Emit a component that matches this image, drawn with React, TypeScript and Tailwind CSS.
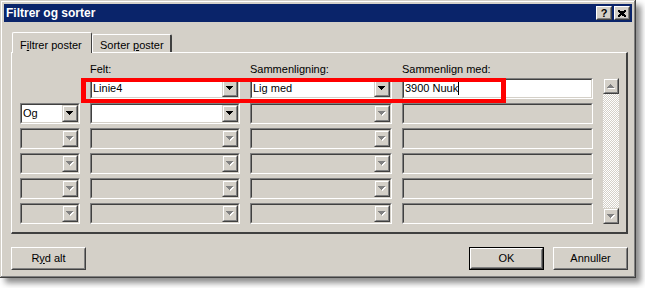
import React from 'react';

const font = "font-['Liberation_Sans',Arial,sans-serif]";

function Arrow({ dir = 'down', disabled = false }: { dir?: 'up' | 'down'; disabled?: boolean }) {
  const rows: [number, number][] = [[0, 7], [1, 5], [2, 3], [3, 1]];
  const y = (i: number) => (dir === 'down' ? i : 3 - i);
  return (
    <svg width="8" height="5" className="block">
      {disabled &&
        rows.map(([x, w], i) => <rect key={'s' + i} x={x + 1} y={y(i) + 1} width={w} height={1} fill="#fff" />)}
      {rows.map(([x, w], i) => (
        <rect key={i} x={x} y={y(i)} width={w} height={1} fill={disabled ? '#808080' : '#000'} />
      ))}
    </svg>
  );
}

// small raised button used in combos and the scrollbar
function SmallBtn({ dir = 'down', disabled = false, h = 'h-[17px]' }: { dir?: 'up' | 'down'; disabled?: boolean; h?: string }) {
  return (
    <div className={`w-[16px] ${h} bg-[#d4d0c8] border border-t-[#d4d0c8] border-l-[#d4d0c8] border-r-[#404040] border-b-[#404040]`}>
      <div className="w-full h-full flex items-center justify-center border border-t-white border-l-white border-r-[#808080] border-b-[#808080]">
        <Arrow dir={dir} disabled={disabled} />
      </div>
    </div>
  );
}

function Field({
  className,
  white = false,
  combo = false,
  arrowDisabled = true,
  children,
}: {
  className: string;
  white?: boolean;
  combo?: boolean;
  arrowDisabled?: boolean;
  children?: React.ReactNode;
}) {
  return (
    <div className={`${className} h-[21px] border border-t-[#808080] border-l-[#808080] border-r-white border-b-white`}>
      <div
        className={`flex h-full border border-t-[#404040] border-l-[#404040] border-r-[#d4d0c8] border-b-[#d4d0c8] ${
          white ? 'bg-white' : 'bg-[#d4d0c8]'
        }`}
      >
        <div className="flex-1 flex items-center pl-[1px] text-[11px] leading-[13px] text-black whitespace-nowrap">
          {children}
        </div>
        {combo && <SmallBtn disabled={arrowDisabled} />}
      </div>
    </div>
  );
}

function PushButton({ children, isDefault = false }: { children: React.ReactNode; isDefault?: boolean }) {
  const inner = (
    <div className="w-full h-full border border-t-white border-l-white border-r-[#404040] border-b-[#404040]">
      <div className="w-full h-full flex items-center justify-center border border-t-[#d4d0c8] border-l-[#d4d0c8] border-r-[#808080] border-b-[#808080] text-[11px] text-black">
        {children}
      </div>
    </div>
  );
  return (
    <div className={`w-[75px] h-[23px] bg-[#d4d0c8] ${isDefault ? 'border border-black' : ''}`}>{inner}</div>
  );
}

export default function App() {
  const disabledRows = [0, 1, 2, 3];

  return (
    <div className={`relative w-[645px] h-[288px] bg-white ${font}`}>
      {/* Window */}
      <div className="w-[636px] h-[278px] bg-[#d4d0c8] p-[4px] flex flex-col shadow-[inset_-1px_-1px_#404040,inset_1px_1px_#d4d0c8,inset_-2px_-2px_#808080,inset_2px_2px_#fff,5px_5px_6px_rgba(0,0,0,0.45)]">
        {/* Title bar */}
        <div className="h-[18px] bg-[#0a246a] flex items-center justify-between pl-[2px] pr-[2px]">
          <span className="text-white font-bold text-[12px] leading-[14px]">Filtrer og sorter</span>
          <div className="flex gap-[2px]">
            <div className="w-[16px] h-[14px] bg-[#d4d0c8] border border-t-white border-l-white border-r-[#404040] border-b-[#404040]">
              <div className="w-full h-full flex items-center justify-center border border-t-[#d4d0c8] border-l-[#d4d0c8] border-r-[#808080] border-b-[#808080] text-[11px] leading-[11px] font-bold text-black">
                ?
              </div>
            </div>
            <div className="w-[16px] h-[14px] bg-[#d4d0c8] border border-t-white border-l-white border-r-[#404040] border-b-[#404040]">
              <div className="w-full h-full flex items-center justify-center border border-t-[#d4d0c8] border-l-[#d4d0c8] border-r-[#808080] border-b-[#808080]">
                <svg width="8" height="7" className="block">
                  <path d="M0 0L8 7M1 0L8 6M0 1L7 7M8 0L0 7M7 0L0 6M8 1L1 7" stroke="#000" strokeWidth="1" shapeRendering="crispEdges" />
                </svg>
              </div>
            </div>
          </div>
        </div>

        {/* Tabs + panel */}
        <div className="pl-[7px] pr-[4px] mt-[10px]">
          <div className="flex items-end h-[20px] pl-[1px]">
            <div className="relative z-10 w-[80px] h-[21px] -mb-[1px] bg-[#d4d0c8] border-t border-l border-white border-r border-r-[#404040] rounded-t-[2px] pl-[7px] pt-[4px] text-[11px] text-black">
              F<span className="underline">i</span>ltrer poster
            </div>
            <div className="w-[80px] h-[18px] bg-[#d4d0c8] border-t border-l border-white border-r-2 border-r-[#404040] rounded-t-[2px] pl-[7px] pt-[2px] text-[11px] text-black">
              Sorter <span className="underline">p</span>oster
            </div>
          </div>
          <div className="h-[182px] border-t border-l border-white border-r-2 border-b-2 border-r-[#404040] border-b-[#404040] pt-[10px] pl-[8px]">
            <div className="grid grid-cols-[60px_150px_142px_191px] gap-x-[10px] h-[13px] mb-[2px] text-[11px] leading-[13px] text-black">
              <span />
              <span>Felt:</span>
              <span>Sammenligning:</span>
              <span>Sammenlign med:</span>
            </div>
            <div className="flex gap-[10px]">
              <div className="flex flex-col gap-[4px]">
                <div className="flex gap-[10px]">
                  <div className="w-[60px]" />
                  <Field className="w-[150px]" white combo arrowDisabled={false}>Linie4</Field>
                  <Field className="w-[142px]" white combo arrowDisabled={false}>Lig med</Field>
                  <Field className="w-[191px]" white>
                    <span>3900 Nuuk</span>
                    <span className="inline-block w-[1px] h-[13px] bg-black" />
                  </Field>
                </div>
                <div className="flex gap-[10px]">
                  <Field className="w-[60px]" white combo arrowDisabled={false}>Og</Field>
                  <Field className="w-[150px]" white combo arrowDisabled={false} />
                  <Field className="w-[142px]" combo />
                  <Field className="w-[191px]" />
                </div>
                {disabledRows.map((r) => (
                  <div key={r} className="flex gap-[10px]">
                    <Field className="w-[60px]" combo />
                    <Field className="w-[150px]" combo />
                    <Field className="w-[142px]" combo />
                    <Field className="w-[191px]" />
                  </div>
                ))}
              </div>
              {/* Scrollbar */}
              <div className="w-[16px] h-[146px] flex flex-col">
                <SmallBtn dir="up" disabled h="h-[16px]" />
                <div className="flex-1 bg-[repeating-conic-gradient(#ffffff_0_25%,#d4d0c8_0_50%)] bg-[length:2px_2px]" />
                <SmallBtn dir="down" disabled h="h-[16px]" />
              </div>
            </div>
          </div>
        </div>

        {/* Buttons */}
        <div className="flex items-center pl-[7px] pr-[4px] mt-[13px]">
          <PushButton>
            R<span className="underline">y</span>d alt
          </PushButton>
          <div className="flex-1" />
          <PushButton isDefault>OK</PushButton>
          <div className="w-[9px]" />
          <PushButton>Annuller</PushButton>
        </div>
      </div>

      {/* Red highlight */}
      <div className="absolute left-[81px] top-[78px] w-[425px] h-[25px] border-x-[5px] border-y-[4px] border-[#ff0000]" />
    </div>
  );
}
